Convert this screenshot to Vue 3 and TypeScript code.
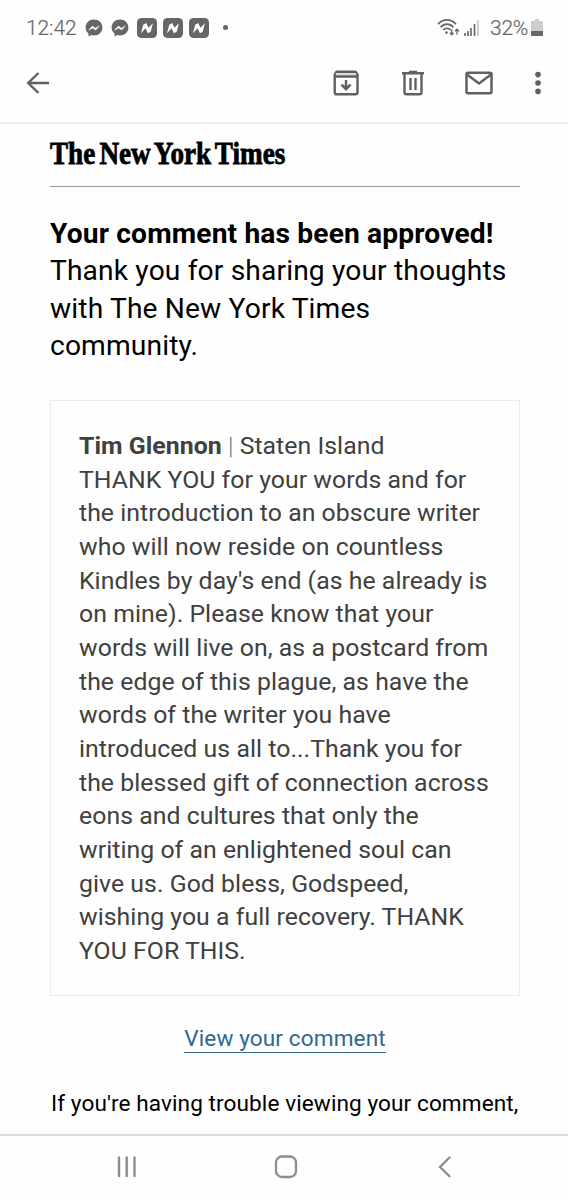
<script setup lang="ts">
interface Line {
  text: string
}

const intro: Line[] = [
  { text: 'Thank you for sharing your thoughts' },
  { text: 'with The New York Times' },
  { text: 'community.' },
]

const comment: Line[] = [
  { text: 'THANK YOU for your words and for' },
  { text: 'the introduction to an obscure writer' },
  { text: 'who will now reside on countless' },
  { text: "Kindles by day's end (as he already is" },
  { text: 'on mine). Please know that your' },
  { text: 'words will live on, as a postcard from' },
  { text: 'the edge of this plague, as have the' },
  { text: 'words of the writer you have' },
  { text: 'introduced us all to...Thank you for' },
  { text: 'the blessed gift of connection across' },
  { text: 'eons and cultures that only the' },
  { text: 'writing of an enlightened soul can' },
  { text: 'give us. God bless, Godspeed,' },
  { text: 'wishing you a full recovery. THANK' },
  { text: 'YOU FOR THIS.' },
]
</script>

<template>
  <div class="screen">
    <header class="status">
      <span class="time">12:42</span>
      <svg v-for="n in 2" :key="'m' + n" class="messenger" width="18" height="18" viewBox="0 0 18 18">
        <path d="M9 .6C4.200.600 .6 4 .6 8.500c0 2.500 1.100 4.600 2.900 6.100V17.600l2.700-1.500c.9.300 1.800.4 2.800.4 4.800 0 8.400-3.500 8.400-8S13.800.600 9 .600z" fill="#666" />
        <path d="M3.700 11.200l3.700-4.100 2.900 2.200 4-2.400-3.700 4.200-2.900-2.200z" fill="#fff" stroke="#fff" stroke-width=".5" />
      </svg>
      <svg v-for="n in 3" :key="'n' + n" class="news" width="20" height="20" viewBox="0 0 20 20">
        <rect width="20" height="20" rx="4.500" fill="#666" />
        <path d="M4 15.200L6.200 6.800l3-1.800 2.300 4.700 4.400-4.500-2.200 8.500-2.800 1.500-2.400-4.900z" fill="#fff" />
      </svg>
      <span class="dot"></span>
      <span class="spring"></span>
      <svg class="wifi" width="24" height="20" viewBox="0 0 24 20" fill="none" stroke="#666" stroke-width="1.700">
        <path d="M1 6.200C6 .5 14 .5 19 6.200M3.600 9.200c3.700-4 9.100-4 12.800 0M6.300 12c2.200-2.200 5.200-2.200 7.400 0" />
        <circle cx="9.500" cy="14.600" r="1.300" fill="#666" stroke="none" />
        <path d="M14.700 11.500v5M12.800 14.700l1.900 2 1.900-2M20 16.500v-5M18.100 13.300l1.900-2 1.900 2" stroke-width="1.300" />
      </svg>
      <svg class="signal" width="15" height="16" viewBox="0 0 15 16" stroke-width="1.600">
        <path d="M1 13v3M4 11v5M7 8v8M10.500 4v12" stroke="#666" />
        <path d="M13.900 0v16" stroke="#c4c4c4" />
      </svg>
      <span class="percent">32%</span>
      <svg class="battery" width="12" height="18" viewBox="0 0 12 18">
        <path d="M4 0h4v2h3q1 0 1 1v9H0V3q0-1 1-1h3z" fill="#ccc" />
        <path d="M0 12h12v4q0 1-1 1H1q-1 0-1-1z" fill="#666" />
      </svg>
    </header>

    <nav class="toolbar">
      <svg class="back" width="24" height="24" viewBox="0 0 24 24" fill="none" stroke="#5f6063" stroke-width="2.400">
        <path d="M12.500 2L2.200 12l10.300 10M2.400 12H23" />
      </svg>
      <span class="spring"></span>
      <svg class="archive" width="26" height="26" viewBox="0 0 26 26" fill="none" stroke="#5f6063" stroke-width="2.400">
        <path d="M3.500 1.700h19l2 3v17.600q0 2-2 2H3.700q-2 0-2-2V4.700z" stroke-linejoin="round" />
        <path d="M3.400 3h19.200l1 2.400H2.400z" fill="#dadce0" stroke="none" />
        <path d="M2 6.500h22M13 10v9" />
        <path d="M8.500 14.600l4.500 4.400 4.500-4.400" stroke-width="2.700" />
      </svg>
      <svg class="trash" width="24" height="26" viewBox="0 0 24 26" fill="none" stroke="#5f6063" stroke-width="2.400">
        <path d="M1 3.300h22M8 2h8M3.500 3.500v18.800q0 2 2 2h13q2 0 2-2V3.500M9.500 8v12M14.500 8v12" />
      </svg>
      <svg class="mail" width="28" height="24" viewBox="0 0 28 24" fill="none" stroke="#5f6063" stroke-width="2.500">
        <rect x="1.500" y="1.700" width="25" height="20.600" rx="1.500" />
        <path d="M2 3.500l12 9 12-9" />
      </svg>
      <svg class="more" width="6" height="24" viewBox="0 0 6 24" fill="#5f6063">
        <circle cx="3" cy="3.600" r="2.800" /><circle cx="3" cy="12" r="2.800" /><circle cx="3" cy="20.400" r="2.800" />
      </svg>
    </nav>

    <main class="mail-body">
      <div class="masthead">The New York Times</div>
      <section class="intro">
        <strong>Your comment has been approved!</strong>
        <span v-for="line in intro" :key="line.text">{{ line.text }}</span>
      </section>
      <article class="card">
        <div class="byline"><b>Tim Glennon</b> <i>|</i> <span>Staten Island</span></div>
        <p v-for="line in comment" :key="line.text">{{ line.text }}</p>
      </article>
      <a class="view">View your comment</a>
      <p class="trouble">If you're having trouble viewing your comment,</p>
    </main>

    <footer class="navbar">
      <svg width="20" height="22" viewBox="0 0 20 22" stroke="#8d8d8d" stroke-width="2.400" stroke-linecap="round">
        <path d="M2 1.500v18.500M9.700 1.500v18.500M17.500 1.500v18.500" />
      </svg>
      <svg class="home" width="24" height="24" viewBox="0 0 24 24" fill="none" stroke="#8d8d8d" stroke-width="2.300">
        <rect x="2" y="1.500" width="20" height="20.500" rx="6" />
      </svg>
      <svg width="14" height="22" viewBox="0 0 14 22" fill="none" stroke="#8d8d8d" stroke-width="2.300" stroke-linecap="round">
        <path d="M11.500 1.500L2 11l9.500 9.300" />
      </svg>
    </footer>
  </div>
</template>

<style>
body { margin: 0; background: #fefefe; }
</style>

<style scoped>
.screen {
  width: 568px;
  height: 1200px;
  overflow: hidden;
  display: flex;
  flex-direction: column;
  font-family: Roboto, "Liberation Sans", sans-serif;
  background: #fefefe;
}
svg { display: block; flex: none; }
.spring { flex: 1; }
.status {
  height: 55px;
  box-sizing: border-box;
  padding: 0 25px 0 26px;
  display: flex;
  align-items: center;
  color: #666;
}
.time { font-size: 21px; width: 59px; letter-spacing: -0.1px; font-weight: 300; -webkit-text-stroke: .2px #666; }
.messenger { margin-right: 8px; }
.news { margin-right: 6px; }
.dot { width: 5px; height: 5px; border-radius: 50%; background: #666; margin-left: 8px; }
.wifi { margin-right: 3px; }
.signal { margin-right: 11px; }
.percent { font-size: 21px; font-weight: 300; margin-right: 3px; letter-spacing: -0.3px; -webkit-text-stroke: .2px #666; }
.toolbar {
  height: 69px;
  box-sizing: border-box;
  border-bottom: 2px solid #ededed;
  padding: 0 27px 12px 26px;
  display: flex;
  align-items: center;
}
.archive { margin-right: 42px; }
.trash { margin-right: 40px; }
.mail { margin-right: 42px; }
.mail-body { flex: 1; padding: 8px 48px 0 50px; display: flex; flex-direction: column; }
.masthead {
  align-self: flex-start;
  height: 44px;
  line-height: 44px;
  font-family: "Liberation Serif", serif;
  font-size: 31px;
  font-weight: bold;
  word-spacing: -3px;
  white-space: nowrap;
  color: #000;
  -webkit-text-stroke: .8px #000;
  transform: scaleX(.876);
  transform-origin: left center;
}
.intro {
  margin-top: 10px;
  border-top: 1px solid #999;
  padding-top: 27.500px;
  display: flex;
  flex-direction: column;
  font-size: 28.200px;
  letter-spacing: .14px;
  line-height: 37.500px;
  white-space: nowrap;
  color: #000;
}
.card {
  box-sizing: border-box;
  height: 596px;
  margin-top: 35.500px;
  border: 1px solid #ebebeb;
  padding: 28px 0 0 28px;
  font-size: 24.800px;
  letter-spacing: .05px;
  line-height: 33.670px;
  color: #404040;
  white-space: nowrap;
}
.card p { margin: 0; }
.card i { font-style: normal; font-weight: 300; color: #777; }
.view {
  align-self: center;
  margin-top: 28px;
  height: 28px;
  line-height: 29px;
  font-size: 22.600px;
  letter-spacing: .1px;
  color: #326891;
  border-bottom: 1px solid #326891;
}
.trouble { margin: 37px 0 0 1px; font-size: 22.600px; letter-spacing: .08px; line-height: 28px; white-space: nowrap; color: #000; }
.navbar {
  height: 66px;
  box-sizing: border-box;
  border-top: 2px solid #ddd;
  padding: 0 116px 3px 117px;
  display: flex;
  align-items: center;
  justify-content: space-between;
}
.home { margin-right: 4px; }
</style>
